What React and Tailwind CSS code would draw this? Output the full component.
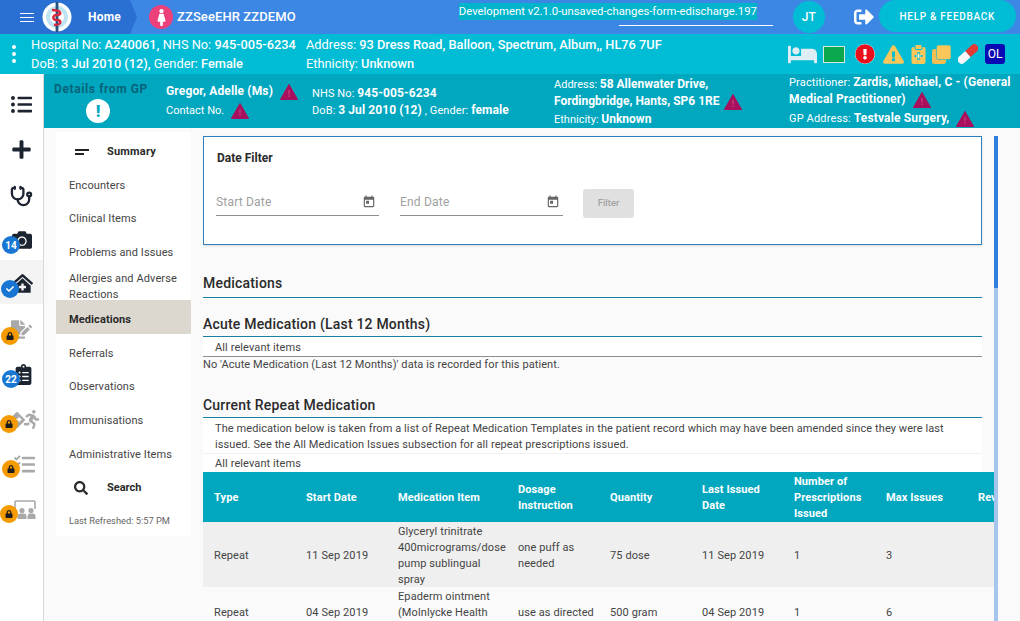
import React from 'react';
import {
  FaBed,
  FaCamera,
  FaCheck,
  FaDirections,
  FaExclamationCircle,
  FaExclamationTriangle,
  FaFileSignature,
  FaLock,
  FaPlus,
  FaRunning,
  FaSearch,
  FaSignOutAlt,
  FaTasks,
  FaFemale,
  FaListUl,
  FaClipboardList,
  FaClinicMedical,
} from 'react-icons/fa';
import { MdToday } from 'react-icons/md';
import { Stethoscope } from 'lucide-react';

const font = "font-['Roboto','Liberation_Sans',sans-serif]";

function Warn() {
  return (
    <svg viewBox="0 0 18 16" className="inline-block w-[18px] h-[16px] shrink-0">
      <path d="M9 0.5 L17.6 15.5 H0.4 Z" fill="#a80f5c" stroke="#a80f5c" strokeLinejoin="round" />
      <rect x="8.3" y="6" width="1.4" height="4.5" fill="#c83a7c" />
      <rect x="8.3" y="11.5" width="1.4" height="1.5" fill="#c83a7c" />
    </svg>
  );
}

function Logo() {
  return (
    <svg viewBox="0 0 30 30" className="w-[30px] h-[30px]">
      <circle cx="15" cy="15" r="14.5" fill="#fff" />
      <circle cx="15" cy="15" r="11" fill="#bfe3f2" />
      <circle cx="15" cy="15" r="7" fill="#fff" />
      <rect x="13.6" y="0" width="2.8" height="30" fill="#24527f" />
      <path d="M10 8 C20 8 20 13 15 13 C10 13 10 18 15 18 C20 18 20 23 12 23" fill="none" stroke="#d8283c" strokeWidth="2.4" />
    </svg>
  );
}

function Pill() {
  return (
    <svg viewBox="0 0 20 20" className="w-[20px] h-[20px]">
      <g transform="rotate(-42 10 10)">
        <path d="M10 6 H1.5 a4 4 0 0 0 0 8 H10 Z" fill="#f7f7f7" />
        <path d="M10 6 H18.5 a4 4 0 0 1 0 8 H10 Z" fill="#e53935" />
      </g>
    </svg>
  );
}

function ClipboardPlus() {
  return (
    <svg viewBox="0 0 15 20" className="w-[15px] h-[20px]">
      <rect x="0.5" y="3" width="14" height="17" rx="2" fill="#fbc75a" />
      <rect x="4" y="0.5" width="7" height="5" rx="1" fill="#fbc75a" stroke="#00bcd4" />
      <path d="M7.5 8 V16 M3.5 12 H11.5" stroke="#00bcd4" strokeWidth="2.2" />
      <path d="M7.5 9.5 V14.5 M5 12 H10" stroke="#fff3cf" strokeWidth="1" />
    </svg>
  );
}

function Squares() {
  return (
    <svg viewBox="0 0 19 19" className="w-[19px] h-[19px]">
      <rect x="0" y="4" width="14" height="15" rx="2.5" fill="#f5bd52" />
      <rect x="4.5" y="0" width="14.5" height="14.5" rx="2" fill="#fbc75a" stroke="#00bcd4" strokeWidth="0.6" />
    </svg>
  );
}

function Meeting({ className }) {
  return (
    <svg viewBox="0 0 24 20" fill="currentColor" className={`w-[24px] h-[20px] ${className}`}>
      <path d="M2 9 V2 a1 1 0 0 1 1 -1 H21 a1 1 0 0 1 1 1 V9" fill="none" stroke="currentColor" strokeWidth="1.6" />
      <circle cx="9" cy="10.5" r="2.6" />
      <circle cx="18" cy="10.5" r="2.6" />
      <path d="M4.5 19 v-2.5 a3 3 0 0 1 3 -3 h3 a3 3 0 0 1 3 3 V19 Z" />
      <path d="M14.5 19 v-2.5 a3 3 0 0 1 2 -3 h3 a3 3 0 0 1 3 3 V19 Z" />
    </svg>
  );
}

function Runner({ className }) {
  return (
    <span className={`flex items-center ${className}`}>
      <FaDirections className="text-[16px] -mr-[3px]" />
      <FaRunning className="text-[19px]" />
    </span>
  );
}

function Steth({ className }) {
  return <Stethoscope className={`w-[23px] h-[23px] ${className}`} strokeWidth={2.4} />;
}

function RailItem({ icon: Icon, size = 'text-[21px]', muted, badge, lock, check, active, badgeClass = 'left-[2px] top-[19px]', iconClass = '' }) {
  return (
    <div className={`relative flex items-center justify-center shrink-0 ${active ? 'bg-[#f4f4f4] h-[44px] -mt-[2px] mb-[3px]' : 'h-[45px]'}`}>
      <Icon className={`${size} ${iconClass} ${muted ? 'text-[#a9a9a9]' : 'text-[#1c2430]'}`} />
      {badge && (
        <span className={`absolute ${badgeClass} w-[18px] h-[18px] rounded-full bg-[#1976d2] text-white text-[10px] font-bold flex items-center justify-center`}>
          {badge}
        </span>
      )}
      {check && (
        <span className={`absolute ${badgeClass} w-[18px] h-[18px] rounded-full bg-[#1976d2] text-white flex items-center justify-center`}>
          <FaCheck className="text-[8px]" />
        </span>
      )}
      {lock && (
        <span className={`absolute ${badgeClass} w-[18px] h-[18px] rounded-full bg-[#f59b00] text-[#1c1c1c] flex items-center justify-center`}>
          <FaLock className="text-[8px]" />
        </span>
      )}
    </div>
  );
}

function SubNavItem({ label, tall }) {
  return (
    <div className={`pl-[13px] pr-[4px] flex items-center text-[11px] tracking-[0.1px] text-[#444] ${tall ? 'h-[30px] pt-[4px] leading-[16px]' : 'h-[33.7px]'}`}>
      {label}
    </div>
  );
}

function SectionHeading({ children, className = '' }) {
  return (
    <h3 className={`text-[14px] leading-[18px] font-medium tracking-[0.2px] text-[#2a2a2a] border-b border-[#1b7ea6] ${className}`}>
      {children}
    </h3>
  );
}

const columns = [
  { label: 'Type', width: 'w-[92px]' },
  { label: 'Start Date', width: 'w-[92px]' },
  { label: 'Medication Item', width: 'w-[120px]' },
  { label: 'Dosage Instruction', width: 'w-[92px]' },
  { label: 'Quantity', width: 'w-[92px]' },
  { label: 'Last Issued Date', width: 'w-[92px]' },
  { label: 'Number of Prescriptions Issued', width: 'w-[92px]' },
  { label: 'Max Issues', width: 'w-[92px]' },
  { label: 'Review', width: 'w-[92px]' },
];

const rows = [
  {
    cells: ['Repeat', '11 Sep 2019', 'Glyceryl trinitrate 400micrograms/dose pump sublingual spray', 'one puff as needed', '75 dose', '11 Sep 2019', '1', '3', ''],
    bg: 'bg-[#efefef]',
    height: 'h-[65px]',
    inner: 'pt-[1px] -mb-[1px]',
  },
  {
    cells: ['Repeat', '04 Sep 2019', 'Epaderm ointment (Molnlycke Health Care Ltd)', 'use as directed', '500 gram', '04 Sep 2019', '1', '6', ''],
    bg: 'bg-[#fafafa]',
    height: 'h-[50px]',
    inner: '',
  },
];

export default function App() {
  return (
    <div className={`${font} w-[1020px] h-[621px] overflow-hidden flex flex-col bg-[#fafafa]`}>
      {/* top bar */}
      <header className="h-[34px] shrink-0 flex items-center bg-[#3d87e4] text-white">
        <div className="w-[137px] h-full flex items-center bg-[#2a70d2] [clip-path:polygon(0_0,130px_0,137px_50%,130px_100%,0_100%)]">
          <div className="ml-[20px] w-[14px] flex flex-col gap-[3px]">
            <span className="h-[1px] bg-white" />
            <span className="h-[1px] bg-white" />
            <span className="h-[1px] bg-white" />
          </div>
          <div className="ml-[8px]">
            <Logo />
          </div>
          <span className="ml-[16px] text-[12px] font-bold tracking-[0.2px]">Home</span>
        </div>
        <div className="ml-[12px] w-[24px] h-[24px] rounded-full bg-[#ec407a] flex items-center justify-center">
          <FaFemale className="text-[17px]" />
        </div>
        <span className="ml-[4px] text-[13px] font-medium tracking-[0.1px]">ZZSeeEHR ZZDEMO</span>
        <div className="ml-[163px] w-[314px] h-full relative">
          <span className="absolute left-0 top-[3px] bg-[#00b4cc] text-[11.3px] leading-[17px] whitespace-nowrap">
            Development v2.1.0-unsaved-changes-form-edischarge.197
          </span>
          <span className="absolute left-[160px] right-0 top-[25px] h-[1px] bg-white" />
        </div>
        <div className="ml-[20px] w-[32px] h-[32px] rounded-full bg-[#00bcd4] flex items-center justify-center text-[12px] font-medium">
          JT
        </div>
        <FaSignOutAlt className="ml-[29px] text-[20px]" />
        <div className="ml-[5px] w-[137px] h-[32px] mb-[2px] rounded-full bg-[#00bcd4] flex items-center justify-center text-[10px] font-medium tracking-[0.7px]">
          HELP &amp; FEEDBACK
        </div>
      </header>

      {/* patient banner */}
      <div className="h-[40px] shrink-0 flex items-center bg-[#00bcd4] text-white text-[12.8px] leading-[19px]">
        <div className="w-[31px] pr-[3px] flex flex-col items-center gap-[3px]">
          <span className="w-[4px] h-[4px] rounded-full bg-white" />
          <span className="w-[4px] h-[4px] rounded-full bg-white" />
          <span className="w-[4px] h-[4px] rounded-full bg-white" />
        </div>
        <div className="w-[275px] whitespace-nowrap">
          <div>
            Hospital No: <b className="font-medium">A240061,</b> NHS No: <b className="font-medium">945-005-6234</b>
          </div>
          <div>
            DoB: <b className="font-medium">3 Jul 2010 (12),</b> Gender: <b className="font-medium">Female</b>
          </div>
        </div>
        <div className="w-[482px] whitespace-nowrap">
          <div>
            Address: <b className="font-medium">93 Dress Road, Balloon, Spectrum, Album,, HL76 7UF</b>
          </div>
          <div>
            Ethnicity: <b className="font-medium">Unknown</b>
          </div>
        </div>
        <div className="flex items-center">
          <FaBed className="text-[29px] text-[#dfeef5]" />
          <span className="ml-[6px] w-[22px] h-[17px] bg-[#0aa84f] border border-[#d5e9e0]" />
          <FaExclamationCircle className="ml-[10px] text-[20px] text-[#e8101c] bg-white rounded-full" />
          <FaExclamationTriangle className="ml-[8px] text-[21px] text-[#fbc75a]" />
          <span className="ml-[7px] flex">
            <ClipboardPlus />
          </span>
          <span className="ml-[6px] flex">
            <Squares />
          </span>
          <span className="ml-[7px] flex">
            <Pill />
          </span>
          <span className="ml-[7px] w-[20px] h-[20px] bg-[#0a0ab4] rounded-[3px] text-[12px] flex items-center justify-center">OL</span>
        </div>
      </div>

      <div className="flex-1 flex min-h-0">
        {/* icon rail */}
        <nav className="w-[44px] shrink-0 bg-white border-r border-[#d8d8d8] flex flex-col pt-[8px]">
          <RailItem icon={FaListUl} />
          <RailItem icon={FaPlus} />
          <RailItem icon={Steth} size="" iconClass="mt-[3px]" />
          <RailItem icon={FaCamera} size="text-[20px]" iconClass="ml-[1px]" badge="14" />
          <RailItem icon={FaClinicMedical} iconClass="mt-[3px] ml-[2px]" check active badgeClass="left-[1px] top-[20px]" />
          <RailItem icon={FaFileSignature} muted lock badgeClass="left-[1px] top-[20px]" />
          <RailItem icon={FaClipboardList} badge="22" iconClass="ml-[3px]" badgeClass="left-[2px] top-[18px]" />
          <RailItem icon={Runner} size="" muted lock iconClass="ml-[6px]" badgeClass="left-0 top-[18px]" />
          <RailItem icon={FaTasks} muted lock iconClass="ml-[6px]" badgeClass="left-[2px] top-[18px]" />
          <RailItem icon={Meeting} size="" muted lock iconClass="ml-[6px]" badgeClass="left-0 top-[18px]" />
        </nav>

        <div className="flex-1 min-w-0 flex flex-col">
          {/* details from GP */}
          <div className="h-[54px] shrink-0 flex bg-[#00a7bf] text-white text-[11px] leading-[17px] overflow-hidden">
            <div className="w-[122px] pr-[8px] pt-[7px] flex flex-col items-center">
              <span className="text-[12px] font-bold text-[#07637a] tracking-[0.6px] whitespace-nowrap">Details from GP</span>
              <span className="mt-[1px] mr-[6px] w-[24px] h-[24px] rounded-full bg-white flex items-center justify-center text-[#00a7bf] font-black text-[17px]">
                !
              </span>
            </div>
            <div className="w-[146px] pt-[9px]">
              <div className="font-bold text-[12px] tracking-[0.15px] flex items-center gap-[7px] whitespace-nowrap">
                Gregor, Adelle (Ms) <Warn />
              </div>
              <div className="mt-[2px] flex items-center gap-[7px]">
                Contact No. <Warn />
              </div>
            </div>
            <div className="w-[242px] pt-[11px] leading-[16px] tracking-[0.1px]">
              <div>
                NHS No: <b className="text-[12px]">945-005-6234</b>
              </div>
              <div>
                DoB: <b className="text-[12px]">3 Jul 2010 (12)</b> , Gender: <b className="text-[12px]">female</b>
              </div>
            </div>
            <div className="w-[235px] pt-[2px]">
              <div>
                Address: <b className="text-[12px]">58 Allenwater Drive,</b>
              </div>
              <div className="flex items-center gap-[5px] whitespace-nowrap">
                <b className="text-[12px]">Fordingbridge, Hants, SP6 1RE</b> <Warn />
              </div>
              <div className="mt-[1px]">
                Ethnicity: <b className="text-[12px]">Unknown</b>
              </div>
            </div>
            <div className="flex-1 whitespace-nowrap tracking-[0.15px]">
              <div>
                Practitioner: <b className="text-[12px]">Zardis, Michael, C - (General</b>
              </div>
              <div className="flex items-center gap-[7px]">
                <b className="text-[12px]">Medical Practitioner)</b> <Warn />
              </div>
              <div className="mt-[2px] flex items-center gap-[7px]">
                <span>
                  GP Address: <b className="text-[12px]">Testvale Surgery,</b>
                </span>
                <Warn />
              </div>
            </div>
          </div>

          <div className="flex-1 min-h-0 flex">
            {/* section nav */}
            <aside className="ml-[12px] mt-[4px] w-[135px] h-[404px] shrink-0 bg-white pt-[3px]">
              <div className="h-[34px] flex items-center text-[11px] font-bold text-[#2a2a2a] tracking-[0.2px]">
                <span className="ml-[19px] w-[14px] flex flex-col gap-[2px]">
                  <span className="h-[2px] w-[14px] bg-[#222]" />
                  <span className="h-[2px] w-[9px] bg-[#222]" />
                </span>
                <span className="ml-[18px]">Summary</span>
              </div>
              <SubNavItem label="Encounters" />
              <SubNavItem label="Clinical Items" />
              <SubNavItem label="Problems and Issues" />
              <SubNavItem label="Allergies and Adverse Reactions" tall />
              <div className="h-[34px] mb-[3px] pl-[13px] pt-[6px] flex items-center bg-[#dcd8d0] text-[11px] font-bold tracking-[0.1px] text-[#2a2a2a]">
                Medications
              </div>
              <SubNavItem label="Referrals" />
              <SubNavItem label="Observations" />
              <SubNavItem label="Immunisations" />
              <SubNavItem label="Administrative Items" />
              <div className="h-[33px] flex items-center text-[11px] font-bold text-[#2a2a2a]">
                <FaSearch className="ml-[18px] text-[14px]" />
                <span className="ml-[19px]">Search</span>
              </div>
              <div className="px-[13px] mt-[9px] text-[9.3px] text-[#666]">Last Refreshed: 5:57 PM</div>
            </aside>

            {/* main content */}
            <main className="ml-[12px] flex-1 min-w-0 flex overflow-hidden">
              <div className="w-[791px] shrink-0 pt-[8px] overflow-hidden">
                <div className="w-[779px] h-[109px] bg-white border border-[#2f7fbd] shadow-sm pl-[12px] pt-[12px]">
                  <div className="ml-[1px] text-[12px] font-bold text-[#2a2a2a]">Date Filter</div>
                  <div className="mt-[20px] flex items-start">
                    <div className="w-[163px] h-[29px] pt-[2px] border-b border-[#8f8f8f] flex justify-between items-center pr-[3px]">
                      <span className="text-[12px] text-[#a0a0a0] tracking-[0.2px]">Start Date</span>
                      <MdToday className="text-[14px] text-[#666]" />
                    </div>
                    <div className="ml-[21px] w-[163px] h-[29px] pt-[2px] border-b border-[#8f8f8f] flex justify-between items-center pr-[3px]">
                      <span className="text-[12px] text-[#a0a0a0] tracking-[0.2px]">End Date</span>
                      <MdToday className="text-[14px] text-[#666]" />
                    </div>
                    <div className="ml-[20px] mt-[2px] w-[51px] h-[29px] rounded-[3px] bg-[#e0e0e0] text-[#a3a3a3] text-[9.5px] font-medium flex items-center justify-center">
                      Filter
                    </div>
                  </div>
                </div>

                <div className="w-[779px]">
                  <SectionHeading className="mt-[29px] pb-[5px]">Medications</SectionHeading>
                  <SectionHeading className="mt-[17px] pb-[3px]">Acute Medication (Last 12 Months)</SectionHeading>
                  <div className="h-[20px] bg-white border-b border-[#8f8f8f] pl-[12px] text-[11px] leading-[22px] text-[#444] tracking-[0.1px]">
                    All relevant items
                  </div>
                  <p className="text-[11px] leading-[15px] text-[#444] tracking-[0.08px]">
                    No 'Acute Medication (Last 12 Months)' data is recorded for this patient.
                  </p>
                  <SectionHeading className="mt-[24px] pb-[3px]">Current Repeat Medication</SectionHeading>
                  <div className="bg-white border-b border-[#f0f0f0] pl-[12px] pr-[24px] pt-[3px] text-[11px] leading-[16px] text-[#444] tracking-[0.08px]">
                    The medication below is taken from a list of Repeat Medication Templates in the patient record which may have been amended since they were last issued. See the All Medication Issues subsection for all repeat prescriptions issued.
                  </div>
                  <div className="h-[18px] bg-white pl-[12px] text-[11px] leading-[19px] text-[#444] tracking-[0.1px]">All relevant items</div>
                </div>

                <table className="table-fixed w-[848px] border-collapse text-[11px] leading-[16px] tracking-[0.1px]">
                  <thead>
                    <tr className="h-[50px] bg-[#00a7bf] text-white">
                      {columns.map((col) => (
                        <th key={col.label} className={`${col.width} pl-[11px] pr-[8px] pt-[2px] text-left font-bold`}>
                          {col.label}
                        </th>
                      ))}
                    </tr>
                  </thead>
                  <tbody>
                    {rows.map((row) => (
                      <tr key={row.cells[1]} className={`${row.bg} ${row.height} text-[#444]`}>
                        {row.cells.map((cell, i) => (
                          <td key={i} className="pl-[11px] pr-[2px] pt-[1px]">
                            <div className={row.inner}>{cell}</div>
                          </td>
                        ))}
                      </tr>
                    ))}
                  </tbody>
                </table>
              </div>

              {/* scroll track */}
              <div className="w-[4px] shrink-0 mt-[8px] bg-[#a3c5ee]">
                <div className="h-[152px] bg-[#2f7fdc]" />
              </div>
            </main>
          </div>
        </div>
      </div>
    </div>
  );
}
